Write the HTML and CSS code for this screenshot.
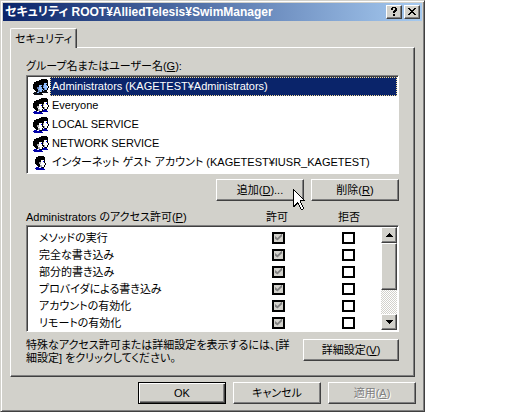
FILE: index.html
```html
<!DOCTYPE html>
<html lang="ja">
<head>
    <meta charset="UTF-8">
    <meta name="viewport" content="width=device-width, initial-scale=1.0">
    <title>セキュリティ ROOT¥AlliedTelesis¥SwimManager</title>
    <link rel="stylesheet" href="styles.css">
</head>
<body>
    <svg class="symbols" width="0" height="0" aria-hidden="true">
        <symbol id="head" viewBox="0 0 11 14">
            <path fill="#000" d="M3 0h6v1h1v3H9v1H6v4H5v2H3v-1H2V9H1V8H0V3h1V1h2z"/>
            <path fill="#fff" d="M6 4h3v4h1v1H9v2H6v2H4v-2h1V8h1z"/>
            <path fill="#aaa" d="M4 6h2v2H4zM5 9h2v2H5z"/>
            <path fill="#00f" d="M8 5h1v1H8z"/>
            <path fill="#000" d="M9 4h1v3H9zM10 7h1v2h-1zM9 9h1v2H9zM7 11h2v1H7z"/>
            <path fill="#0000a8" d="M1 11h3v1h2v-1h1v1h2v1h1v1H1v-1H0v-1h1z"/>
        </symbol>
        <symbol id="group" viewBox="0 0 17 16">
            <use href="#head" x="5" y="0" width="11" height="14"/>
            <use href="#head" x="0" y="2" width="11" height="14"/>
        </symbol>
        <symbol id="user" viewBox="0 0 17 16">
            <use href="#head" x="2" y="1" width="11" height="14"/>
        </symbol>
    </svg>

    <div class="dialog" role="dialog" aria-labelledby="title">
        <div class="titlebar">
            <h1 id="title">セキュリティ ROOT¥AlliedTelesis¥SwimManager</h1>
            <button class="caption-btn" aria-label="ヘルプ">
                <svg width="8" height="9" viewBox="0 0 8 9"><path d="M2 0h4v1h1v3H6v1H5v1H3V4h1V3h1V1H3v2H1V1h1zM3 7h2v2H3z"/></svg>
            </button>
            <button class="caption-btn" aria-label="閉じる">
                <svg width="8" height="7" viewBox="0 0 8 7"><path d="M0 0h2v1h1v1h2V1h1V0h2v1H7v1H6v1H5v1h1v1h1v1h1v1H6V6H5V5H3v1H2v1H0V6h1V5h1V4h1V3H2V2H1V1H0z"/></svg>
            </button>
        </div>

        <div class="tabs" role="tablist">
            <button class="tab" role="tab" aria-selected="true">セキュリティ</button>
        </div>

        <div class="panel" role="tabpanel">
            <div class="label" id="names">グループ名またはユーザー名(<u>G</u>):</div>
            <ul class="users" role="listbox" aria-labelledby="names">
                <li class="user selected" role="option" aria-selected="true"><svg width="17" height="16"><use href="#group"/></svg><span>Administrators (KAGETEST¥Administrators)</span></li>
                <li class="user" role="option"><svg width="17" height="16"><use href="#group"/></svg><span>Everyone</span></li>
                <li class="user" role="option"><svg width="17" height="16"><use href="#group"/></svg><span>LOCAL SERVICE</span></li>
                <li class="user" role="option"><svg width="17" height="16"><use href="#group"/></svg><span>NETWORK SERVICE</span></li>
                <li class="user" role="option"><svg width="17" height="16"><use href="#user"/></svg><span>インターネット ゲスト アカウント (KAGETEST¥IUSR_KAGETEST)</span></li>
            </ul>

            <div class="actions">
                <div class="pointed">
                    <button class="btn">追加(<u>D</u>)...</button>
                    <svg class="cursor" width="12" height="21" viewBox="0 0 12 21">
                        <path fill="#000" d="M0 0h1v1h1v1h1v1h1v1h1v1h1v1h1v1h1v1h1v1h1v1h1v1h1v1H8v2h1v2h1v2h1v2h-1v1H8v-1H7v-2H6v-2H5v-1H4v1H3v1H2v1H0z"/>
                        <path fill="#fff" d="M1 2h1v1h1v1h1v1h1v1h1v1h1v1h1v1h1v1h1v1H7v3h1v2h1v2h1v2H8v-2H7v-2H6v-2H5v-1H4v1H3v1H2v1H1z"/>
                    </svg>
                </div>
                <button class="btn">削除(<u>R</u>)</button>
            </div>

            <div class="perm-head">
                <span id="perms">Administrators のアクセス許可(<u>P</u>)</span>
                <span id="allow">許可</span>
                <span id="deny">拒否</span>
            </div>
            <div class="perm-box">
                <table class="perms" aria-labelledby="perms">
                    <tr><th id="p1">メソッドの実行</th><td><input type="checkbox" aria-labelledby="p1 allow" checked disabled></td><td><input type="checkbox" aria-labelledby="p1 deny"></td></tr>
                    <tr><th id="p2">完全な書き込み</th><td><input type="checkbox" aria-labelledby="p2 allow" checked disabled></td><td><input type="checkbox" aria-labelledby="p2 deny"></td></tr>
                    <tr><th id="p3">部分的書き込み</th><td><input type="checkbox" aria-labelledby="p3 allow" checked disabled></td><td><input type="checkbox" aria-labelledby="p3 deny"></td></tr>
                    <tr><th id="p4">プロバイダによる書き込み</th><td><input type="checkbox" aria-labelledby="p4 allow" checked disabled></td><td><input type="checkbox" aria-labelledby="p4 deny"></td></tr>
                    <tr><th id="p5">アカウントの有効化</th><td><input type="checkbox" aria-labelledby="p5 allow" checked disabled></td><td><input type="checkbox" aria-labelledby="p5 deny"></td></tr>
                    <tr><th id="p6">リモートの有効化</th><td><input type="checkbox" aria-labelledby="p6 allow" checked disabled></td><td><input type="checkbox" aria-labelledby="p6 deny"></td></tr>
                </table>
                <div class="scrollbar">
                    <button class="scroll-btn" aria-label="上へ"><svg width="7" height="4" viewBox="0 0 7 4"><path d="M3 0h1v1h1v1h1v1h1v1H0V3h1V2h1V1h1z"/></svg></button>
                    <div class="thumb"></div>
                    <button class="scroll-btn" aria-label="下へ"><svg width="7" height="4" viewBox="0 0 7 4"><path d="M0 0h7v1H6v1H5v1H4v1H3V3H2V2H1V1H0z"/></svg></button>
                </div>
            </div>

            <div class="advanced">
                <p>特殊なアクセス許可または詳細設定を表示するには、[詳<br>細設定] をクリックしてください。</p>
                <button class="btn btn-wide">詳細設定(<u>V</u>)</button>
            </div>
        </div>

        <div class="footer">
            <button class="btn btn-default">OK</button>
            <button class="btn">キャンセル</button>
            <button class="btn" disabled>適用(<u>A</u>)</button>
        </div>
    </div>
</body>
</html>
```

FILE: styles.css
```css
* {
    box-sizing: border-box;
}
body {
    margin: 0;
    background-color: #FFFFFF;
    color: #000000;
    font-family: "Liberation Sans", "Noto Sans CJK JP", sans-serif;
    font-size: 11px;
    line-height: 14px;
    font-feature-settings: "palt";
}
button {
    font: inherit;
    font-feature-settings: inherit;
    color: inherit;
    padding: 0;
}
svg {
    display: block;
    flex: none;
    shape-rendering: crispEdges;
}
.symbols {
    position: absolute;
}
.dialog {
    max-width: 425px;
    padding: 2px 2px 7px;
    background-color: #D2D1CB;
    border: 1px solid;
    border-color: #D2D1CB #404040 #404040 #D2D1CB;
    box-shadow: inset 1px 1px #FFFFFF, inset -1px -1px #808080;
}

/* title bar */
.titlebar {
    display: flex;
    align-items: center;
    height: 18px;
    padding: 0 2px;
    background: linear-gradient(to right, #0A246A, #A6CAF0);
    color: #FFFFFF;
}
h1 {
    flex: 1;
    margin: 0;
    font-size: 12px;
    font-weight: bold;
    white-space: nowrap;
}
.caption-btn,
.btn,
.scroll-btn,
.thumb {
    display: flex;
    align-items: center;
    justify-content: center;
    background-color: #D2D1CB;
    border: 1px solid;
    border-color: #FFFFFF #404040 #404040 #FFFFFF;
    box-shadow: inset -1px -1px #808080;
}
.caption-btn {
    width: 16px;
    height: 14px;
    margin-left: 2px;
    padding: 0 1px 1px 0;
}

/* tab and its panel */
.tabs {
    display: flex;
    padding: 7px 7px 0;
}
.tab {
    height: 20px;
    width: 67px;
    margin-bottom: -1px;
    position: relative;
    background-color: #D2D1CB;
    border: 1px solid;
    border-color: #FFFFFF #404040 transparent #FFFFFF;
    border-bottom: 0;
    border-radius: 2px 2px 0 0;
    box-shadow: inset -1px 0 #808080;
    white-space: nowrap;
}
.panel {
    margin: 0 7px;
    padding: 11px 15px;
    border: 1px solid;
    border-color: #FFFFFF #404040 #404040 #FFFFFF;
    box-shadow: inset -1px -1px #808080;
}
.label {
    margin-bottom: 2px;
}
.users,
.perm-box {
    background-color: #FFFFFF;
    border: 1px solid;
    border-color: #808080 #FFFFFF #FFFFFF #808080;
    box-shadow: inset 1px 1px #404040;
}
.users {
    height: 99px;
    margin: 0;
    padding: 1px 1px 1px 6px;
    list-style: none;
}
.user {
    display: flex;
    align-items: center;
    height: 19px;
    white-space: nowrap;
}
.user span {
    flex: 1;
    padding: 2px 1px;
    border: 1px solid transparent;
    line-height: 13px;
}
.selected span {
    background-color: #0A246A;
    border: 1px dotted #F5DB95;
    color: #FFFFFF;
}
/* highlight tint over the icon of the selected row */
.selected svg {
    filter: brightness(0.6) sepia(1) hue-rotate(180deg) saturate(2);
}
.actions {
    display: flex;
    justify-content: flex-end;
    gap: 7px;
    margin: 5px 0;
}
.btn {
    width: 88px;
    height: 22px;
}
.btn-wide {
    width: 96px;
    flex: none;
}
.btn-default {
    border-color: #000000;
    box-shadow: inset 1px 1px #FFFFFF, inset -1px -1px #404040, inset -2px -2px #808080;
}
.btn:disabled {
    color: #808080;
    text-shadow: 1px 1px #FFFFFF;
}
.pointed {
    position: relative;
}
.cursor {
    position: absolute;
    right: -1px;
    top: 10px;
}

/* permissions */
.perm-head {
    display: grid;
    grid-template-columns: 1fr 72px 84px;
    margin-bottom: 1px;
    padding-top: 4px;
}
.perm-head span + span {
    padding-left: 23px;
}
.perm-box {
    display: flex;
    height: 107px;
    padding: 1px;
}
.perms {
    flex: 1;
    height: max-content;
    margin: 2px 0 0;
    border-collapse: collapse;
}
.perms tr {
    height: 17px;
}
.perms th,
.perms td {
    padding: 0;
}
.perms th {
    padding-left: 11px;
    font-weight: normal;
    text-align: left;
}
.perms td {
    width: 70px;
    padding-left: 31px;
}
input {
    display: block;
    position: relative;
    appearance: none;
    width: 13px;
    height: 12px;
    margin: 0;
    background-color: #FFFFFF;
    border: 2px solid #000000;
}
input:disabled {
    background-color: #D2D1CB;
}
input:checked::before {
    content: "";
    position: absolute;
    inset: 0 1px 1px;
    background-color: #808080;
    clip-path: polygon(0 35%, 35% 65%, 100% 0, 100% 40%, 35% 100%, 0 75%);
}
.scrollbar {
    display: flex;
    flex-direction: column;
    width: 16px;
    background: repeating-conic-gradient(#FFFFFF 0 25%, #D2D1CB 0 50%) 0 0 / 2px 2px;
}
.scroll-btn {
    height: 16px;
    padding: 0;
}
.thumb {
    height: 47px;
    margin-bottom: auto;
}
.advanced {
    display: flex;
    justify-content: space-between;
    padding-top: 7px;
}
.advanced p {
    margin: 0;
    line-height: 13px;
    white-space: nowrap;
}
.footer {
    display: flex;
    justify-content: flex-end;
    gap: 7px;
    padding: 5px 6px 0;
}
```
